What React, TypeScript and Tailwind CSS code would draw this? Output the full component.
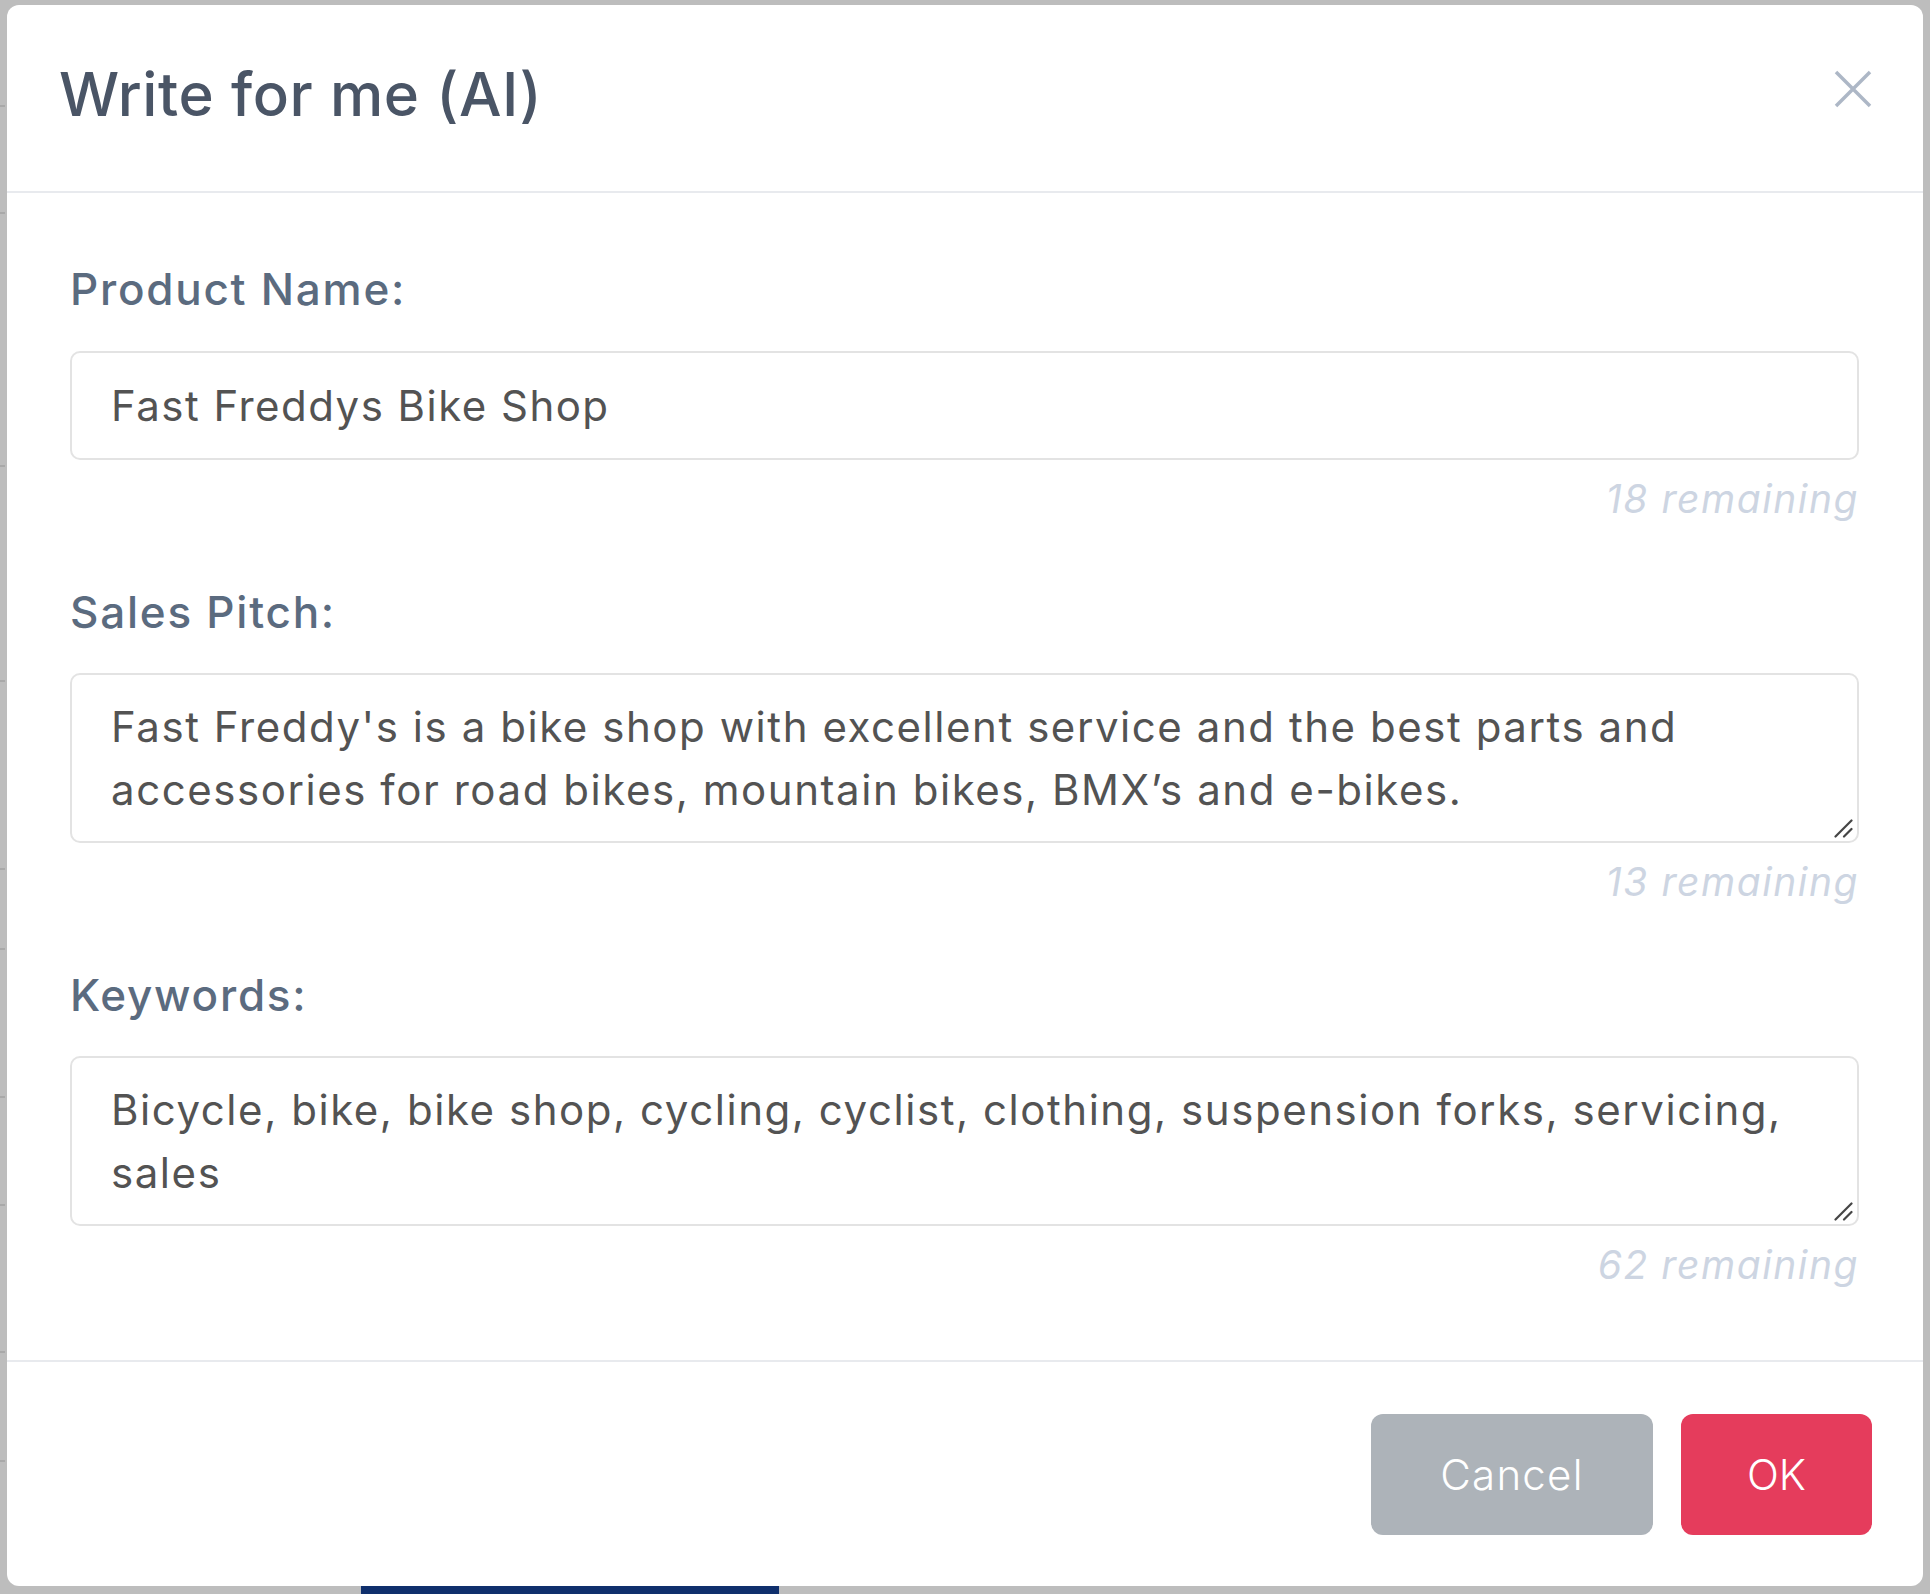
import React from "react";

const FONT = "font-['Inter','Noto_Sans',sans-serif]";

function ResizeHandle() {
  return (
    <svg
      className="absolute right-[5px] bottom-[4px] pointer-events-none"
      width="20"
      height="20"
      viewBox="0 0 20 20"
      fill="none"
      stroke="#454545"
      strokeWidth="2.2"
      strokeLinecap="round"
    >
      <path d="M17.5 1.5 L1.5 17.5 M17.5 10 L10 17.5" />
    </svg>
  );
}

function Field({
  label,
  value,
  remaining,
  multiline,
}: {
  label: string;
  value: string;
  remaining: string;
  multiline?: boolean;
}) {
  return (
    <div className="flex flex-col">
      <div className="h-[64px] flex items-center text-[44px] tracking-[0.04em] font-medium text-[#5b6b7f] leading-[63px]">
        {label}
      </div>
      {multiline ? (
        <div className="relative mt-[29px] h-[170px]">
          <textarea
            readOnly
            value={value}
            className={`block h-[170px] w-full resize-none border-2 border-[#e3e3e3] rounded-[10px] px-[39px] py-[20px] text-[42px] tracking-[0.037em] leading-[63px] text-[#535353] overflow-hidden outline-none ${FONT}`}
          />
          <ResizeHandle />
        </div>
      ) : (
        <input
          readOnly
          value={value}
          className={`mt-[30px] h-[109px] w-full border-2 border-[#e3e3e3] rounded-[10px] px-[39px] text-[42px] tracking-[0.035em] text-[#535353] outline-none ${FONT}`}
        />
      )}
      <div className="mt-[15px] h-[48px] flex items-center justify-end text-[39px] tracking-[0.04em] italic text-[#cdd5e2]">
        {remaining}
      </div>
    </div>
  );
}

const leftLines = [
  "mt-[105px]",
  "mt-[105px]",
  "mt-[251px]",
  "mt-[213px]",
  "mt-[186px]",
  "mt-[78px]",
  "mt-[146px]",
  "mt-[106px]",
  "mt-[145px]",
  "mt-[107px]",
];

export default function App() {
  return (
    <div className={`w-[1930px] h-[1594px] bg-[#bdbdbd] flex overflow-hidden ${FONT}`}>
      <div className="w-[7px] shrink-0 flex flex-col">
        {leftLines.map((m, i) => (
          <div key={i} className={`${m} h-[2px] w-[5px] bg-[#a9a9a9]`} />
        ))}
      </div>
      <div className="pt-[5px] flex flex-col">
        <div className="w-[1916px] h-[1581px] bg-white rounded-[12px] flex flex-col">
          <div className="h-[188px] shrink-0 border-b-2 border-[#e8eaee] flex items-center justify-between pl-[52px] pr-[51px]">
            <h1 className="mb-[8px] text-[60px] tracking-[0.01em] font-medium text-[#4a5566] leading-none">
              Write for me (AI)
            </h1>
            <button className="mb-[18px] w-[38px] h-[38px] text-[#adb7c6]" aria-label="Close">
              <svg viewBox="0 0 38 38" width="38" height="38" fill="none" stroke="currentColor" strokeWidth="3.5" strokeLinecap="butt">
                <path d="M2 2 L36 36 M36 2 L2 36" />
              </svg>
            </button>
          </div>
          <div className="flex-1 flex flex-col gap-[57px] pt-[64px] pb-[70px] pl-[63px] pr-[64px]">
            <Field label="Product Name:" value="Fast Freddys Bike Shop" remaining="18 remaining" />
            <Field
              label="Sales Pitch:"
              multiline
              value={"Fast Freddy's is a bike shop with excellent service and the best parts and\naccessories for road bikes, mountain bikes, BMX\u2019s and e-bikes."}
              remaining="13 remaining"
            />
            <Field
              label="Keywords:"
              multiline
              value={"Bicycle, bike, bike shop, cycling, cyclist, clothing, suspension forks, servicing,\nsales"}
              remaining="62 remaining"
            />
          </div>
          <div className="h-[226px] shrink-0 border-t-2 border-[#e8eaee] flex items-center justify-end gap-[28px] pr-[51px]">
            <button className="w-[282px] h-[121px] rounded-[12px] bg-[#adb3b9] text-white text-[42px] tracking-[0.03em] font-light">
              Cancel
            </button>
            <button className="w-[191px] h-[121px] rounded-[12px] bg-[#e53c5c] text-white text-[42px] font-light">
              OK
            </button>
          </div>
        </div>
        <div className="ml-[354px] w-[418px] h-[8px] bg-[#0f2f6c]" />
      </div>
    </div>
  );
}
